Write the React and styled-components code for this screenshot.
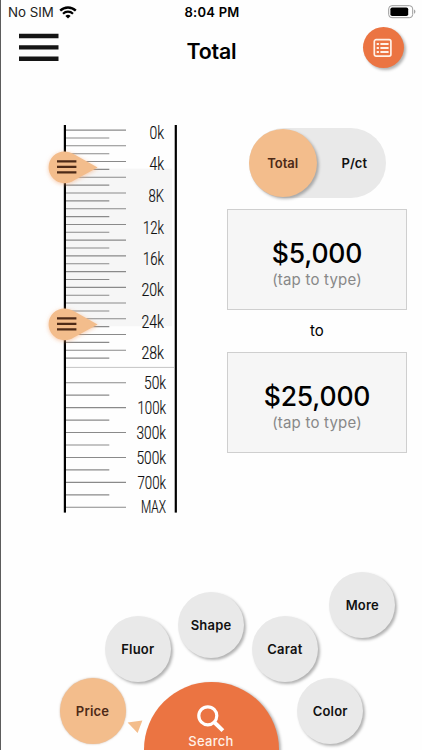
import React from "react";
import styled, { createGlobalStyle } from "styled-components";

const Palette = {
  ORANGE: "#eb7442",
  PEACH: "#f3bd8c",
  GREY: "#e9e9e9",
  BROWN: "#4d2a17",
};

const MINOR_TICKS = Array.from({ length: 30 }, (_, i) => 5.1 + i * 7.862);
const MAJOR_TICKS = Array.from({ length: 11 }, (_, i) => 257.7 + i * 12.46);

const LABELS = [
  { text: "0k", y: 14, w: 14.5, x: 101 },
  { text: "4k", y: 45.3, w: 14.5, x: 101 },
  { text: "8K", y: 77, w: 15.5, x: 101 },
  { text: "12k", y: 108.6, w: 21, x: 101 },
  { text: "16k", y: 140, w: 21, x: 101 },
  { text: "20k", y: 171.4, w: 22.5, x: 101 },
  { text: "24k", y: 203, w: 22.5, x: 101 },
  { text: "28k", y: 234.4, w: 22.5, x: 101 },
  { text: "50k", y: 264.4, w: 22, x: 103 },
  { text: "100k", y: 289.2, w: 28.5, x: 103 },
  { text: "300k", y: 314, w: 29.5, x: 103 },
  { text: "500k", y: 338.7, w: 29.5, x: 103 },
  { text: "700k", y: 363.6, w: 28.5, x: 103 },
  { text: "MAX", y: 388.3, w: 25, x: 103 },
];

const FILTERS = [
  { name: "Price", x: 91.5, y: 711, active: true },
  { name: "Fluor", x: 136.8, y: 648.8 },
  { name: "Shape", x: 210, y: 625 },
  { name: "Carat", x: 283.9, y: 648.8 },
  { name: "More", x: 361.3, y: 604.8 },
  { name: "Color", x: 329.2, y: 711.2 },
];

const Ruler = () => (
  <RulerWrap>
    <Scale width="114" height="394" viewBox="0 0 114 394">
      <rect x="2" y="43.7" width="107" height="157.5" fill="#f6f6f6" />
      {MINOR_TICKS.map((y, i) => (
        <Tick key={y} x1="2" x2={i % 2 ? 46.3 : 63} y1={y} y2={y} />
      ))}
      {MAJOR_TICKS.map((y, i) => (
        <Tick key={y} x1="2" x2={i % 2 ? 46.3 : 63} y1={y} y2={y} />
      ))}
      <path d="M2 242.4H111" stroke="#c4c4c4" />
      <rect x="0.8" y="0" width="2.2" height="387.6" />
      <rect x="111.7" y="0" width="2.2" height="387.6" />
      {LABELS.map((label) => (
        <ScaleLabel
          key={label.text}
          x={label.x - label.w}
          y={label.y}
          textLength={label.w}
          lengthAdjust="spacingAndGlyphs"
        >
          {label.text}
        </ScaleLabel>
      ))}
    </Scale>
    <Handle top={25.6} />
    <Handle top={183} />
  </RulerWrap>
);

const Handle = ({ top }) => (
  <HandleWrap $top={top}>
    <svg width="52" height="34" viewBox="0 0 52 34">
      <path
        d="M16.5 0.4a15.9 15.9 0 1 0 0 31.8c3.6 0 6.6-1 9.3-2.8L49.6 16.4 25.6 3.1A15.9 15.9 0 0 0 16.5 .4z"
        fill={Palette.PEACH}
      />
      <path
        d="M9 10.4h19.4M9 15.9h19.4M9 21.4h19.4"
        stroke={Palette.BROWN}
        strokeWidth="2.3"
      />
    </svg>
  </HandleWrap>
);

const PriceCard = ({ price }) => (
  <CardWrap>
    <Price>{price}</Price>
    <Hint>(tap to type)</Hint>
  </CardWrap>
);

const StatusIcons = {
  Wifi: () => (
    <svg width="18" height="13" viewBox="0 0 18 13" fill="none" stroke="#000">
      <path d="M1.2 4.6a11.2 11.2 0 0 1 15.6 0" strokeWidth="2.4" />
      <path d="M4 7.7a7.2 7.2 0 0 1 10 0" strokeWidth="2.2" />
      <path d="M6.4 9.9a3.8 3.8 0 0 1 5.2 0L9 12.5z" fill="#000" stroke="none" />
    </svg>
  ),
  Battery: () => (
    <svg width="28" height="14" viewBox="0 0 28 14">
      <rect x=".7" y=".7" width="24" height="12" rx="3.2" fill="none" stroke="#9a9a9a" />
      <rect x="2.4" y="2.4" width="17.8" height="8.6" rx="1.8" />
      <path d="M26.1 4.6c1.7.6 1.7 3.6 0 4.2z" fill="#9a9a9a" />
    </svg>
  ),
};

const App = () => {
  return (
    <>
      <GlobalStyle />
      <Screen>
        <StatusBar>
          <Carrier>
            No SIM
            <StatusIcons.Wifi />
          </Carrier>
          <Clock>8:04 PM</Clock>
          <BatteryWrap>
            <StatusIcons.Battery />
          </BatteryWrap>
        </StatusBar>
        <Header>
          <MenuButton>
            <svg width="40" height="29" viewBox="0 0 40 29">
              <path
                d="M0 3h39.5M0 14.4h39.5M0 25.7h39.5"
                stroke="#151515"
                strokeWidth="4.4"
              />
            </svg>
          </MenuButton>
          <Title>Total</Title>
          <ListButton>
            <svg width="20" height="20" viewBox="0 0 20 20" fill="none" stroke="#fff1e8">
              <rect x="1.3" y="1.7" width="16.6" height="16.4" rx="1.8" strokeWidth="1.7" />
              <path d="M7.4 5.9h8.2M7.4 9.9h8.2M7.4 13.9h8.2" strokeWidth="2" />
              <path d="M3.7 5.9h2.2M3.7 9.9h2.2M3.7 13.9h2.2" strokeWidth="2" />
            </svg>
          </ListButton>
        </Header>
        <Main>
          <Ruler />
          <Panel>
            <Toggle>
              <ToggleOption $active>Total</ToggleOption>
              <ToggleOption>P/ct</ToggleOption>
            </Toggle>
            <PriceCard price="$5,000" />
            <To>to</To>
            <PriceCard price="$25,000" />
          </Panel>
        </Main>
        {FILTERS.map((filter) => (
          <Bubble key={filter.name} $x={filter.x} $y={filter.y} $active={filter.active}>
            {filter.name}
          </Bubble>
        ))}
        <Pointer width="16" height="14" viewBox="0 0 16 14">
          <path d="M.6 2.5L15.4.4 10.6 13z" fill={Palette.PEACH} />
        </Pointer>
        <SearchButton>
          <svg width="30" height="30" viewBox="0 0 30 30" fill="none" stroke="#fff">
            <circle cx="11.8" cy="11.8" r="9" strokeWidth="3.2" />
            <path d="M18.3 18.3l8.6 8.3" strokeWidth="4" />
          </svg>
          Search
        </SearchButton>
      </Screen>
    </>
  );
};

export default App;

const GlobalStyle = createGlobalStyle`
  body {
    margin: 0;
    background: #fefefe;
  }
  * {
    box-sizing: border-box;
  }
  svg {
    display: block;
  }
`;

const Screen = styled.div`
  position: relative;
  width: 422px;
  height: 750px;
  overflow: hidden;
  border-left: 1px solid #5c5c5c;
  background: #fefefe;
  font-family: Inter, "Liberation Sans", sans-serif;
  color: #000;
`;

const StatusBar = styled.div`
  display: grid;
  grid-template-columns: 1fr auto 1fr;
  height: 24px;
  padding: 0 6px 0 7px;
  align-items: center;
  font-size: 13.3px;
`;

const Carrier = styled.div`
  display: flex;
  align-items: center;
  gap: 5px;
  color: #222;
`;

const Clock = styled.div`
  font-weight: 600;
  font-size: 13px;
  letter-spacing: 0.25px;
`;

const BatteryWrap = styled.div`
  display: flex;
  justify-content: flex-end;
`;

const Header = styled.div`
  display: grid;
  grid-template-columns: 1fr auto 1fr;
  height: 101px;
  padding: 0 17.5px;
`;

const MenuButton = styled.div`
  padding-top: 9px;
`;

const Title = styled.div`
  padding-top: 14px;
  font-size: 21.3px;
  line-height: 26px;
  font-weight: 600;
  letter-spacing: -0.2px;
`;

const ListButton = styled.div`
  display: flex;
  justify-self: end;
  align-items: center;
  justify-content: center;
  width: 41px;
  height: 41px;
  margin-top: 3px;
  margin-right: 0.7px;
  border-radius: 50%;
  background: ${Palette.ORANGE};
  box-shadow: 2px 2px 3px rgba(0, 0, 0, 0.3);
`;

const Main = styled.div`
  display: flex;
  gap: 50px;
  padding-left: 62px;
`;

const RulerWrap = styled.div`
  position: relative;
  width: 114px;
  height: 394px;
`;

const Scale = styled.svg`
  overflow: visible;
`;

const Tick = styled.line`
  stroke: #8a8a8a;
  stroke-width: 1.1;
`;

const ScaleLabel = styled.text`
  font-family: Roboto, sans-serif;
  font-size: 17.5px;
  font-weight: 300;
  fill: #111;
  stroke: #111;
  stroke-width: 0.2;
`;

const HandleWrap = styled.div`
  position: absolute;
  left: -15px;
  top: ${(props) => props.$top}px;
  filter: drop-shadow(0 1px 2px rgba(243, 170, 120, 0.6));
`;

const Panel = styled.div`
  display: flex;
  flex-direction: column;
  align-items: center;
  width: 180px;
  padding-top: 3px;
`;

const Toggle = styled.div`
  display: flex;
  align-items: center;
  width: 137px;
  height: 70px;
  margin-bottom: 11px;
  border-radius: 35px;
  background: ${Palette.GREY};
`;

const ToggleOption = styled.div`
  width: 68.5px;
  height: 68.5px;
  line-height: 69px;
  border-radius: 50%;
  text-align: center;
  font-size: 13px;
  font-weight: 600;
  color: ${(props) => (props.$active ? Palette.BROWN : "#111")};
  padding-left: ${(props) => (props.$active ? 0 : "6px")};
  background: ${(props) => (props.$active ? Palette.PEACH : "transparent")};
  box-shadow: ${(props) => (props.$active ? "2px 2px 3px rgba(0, 0, 0, 0.28)" : "none")};
`;

const CardWrap = styled.div`
  width: 180px;
  height: 101px;
  padding-top: 27px;
  border: 1px solid #cfcfcf;
  background: #f6f6f6;
  text-align: center;
`;

const Price = styled.div`
  font-size: 26.5px;
  line-height: 32px;
  font-weight: 500;
  letter-spacing: -0.2px;
`;

const Hint = styled.div`
  font-size: 15px;
  line-height: 21px;
  letter-spacing: 0.2px;
  color: #888;
`;

const To = styled.div`
  height: 42px;
  line-height: 42px;
  font-size: 15px;
`;

const Bubble = styled.div`
  position: absolute;
  left: ${(props) => props.$x - 33}px;
  top: ${(props) => props.$y - 33}px;
  width: 66px;
  height: 66px;
  line-height: 66px;
  border-radius: 50%;
  text-align: center;
  font-size: 13px;
  font-weight: 600;
  letter-spacing: 0.2px;
  color: ${(props) => (props.$active ? Palette.BROWN : "#111")};
  background: ${(props) => (props.$active ? Palette.PEACH : Palette.GREY)};
  box-shadow: ${(props) =>
    props.$active ? "0 0 2px rgba(150, 100, 60, 0.5)" : "2px 2px 3px rgba(0, 0, 0, 0.3)"};
`;

const Pointer = styled.svg`
  position: absolute;
  left: 126px;
  top: 720px;
`;

const SearchButton = styled.div`
  position: absolute;
  left: 142.5px;
  top: 682px;
  display: flex;
  flex-direction: column;
  align-items: center;
  width: 135px;
  height: 135px;
  padding-top: 22px;
  border-radius: 50%;
  background: ${Palette.ORANGE};
  box-shadow: 2px 1px 3px rgba(0, 0, 0, 0.3);
  color: #fff1e8;
  font-size: 13px;
  line-height: 15px;
  font-weight: 500;
  letter-spacing: 0.3px;
`;
